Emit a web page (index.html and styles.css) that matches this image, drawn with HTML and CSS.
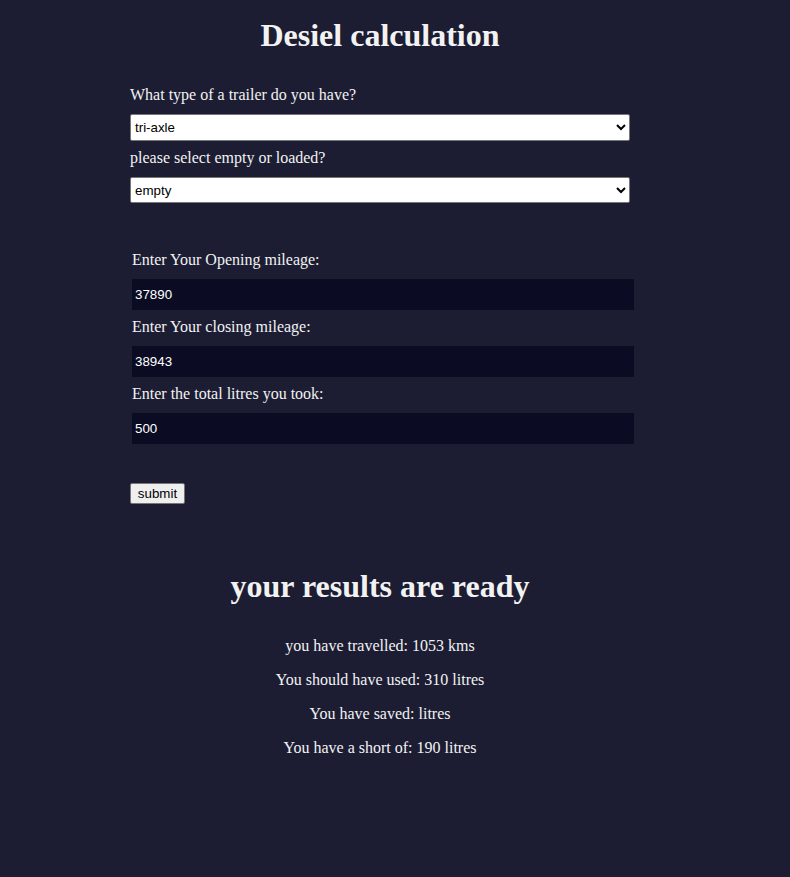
FILE: index.html
```html
<!DOCTYPE html>
<html lang="en">
<head>
<meta charset="utf-8">
<title>Desiel calculation</title>
<link rel="stylesheet" href="styles.css">
</head>
<body>
<main class="wrap">
  <h1 class="title">Desiel calculation</h1>
  <form class="form">
    <label class="label" for="trailer">What type of a trailer do you have?</label>
    <select class="select" id="trailer">
      <option>tri-axle</option>
      <option>interlink</option>
    </select>
    <label class="label label-second" for="load">please select empty or loaded?</label>
    <select class="select select-second" id="load">
      <option>empty</option>
      <option>loaded</option>
    </select>
    <div class="fields">
      <label class="label field-label" for="open">Enter Your Opening mileage:</label>
      <input class="input" id="open" type="text" value="37890">
      <label class="label field-label" for="close">Enter Your closing mileage:</label>
      <input class="input" id="close" type="text" value="38943">
      <label class="label field-label" for="litres">Enter the total litres you took:</label>
      <input class="input" id="litres" type="text" value="500">
    </div>
    <button class="btn" type="button">submit</button>
  </form>
  <section class="results">
    <h2 class="results-title">your results are ready</h2>
    <p class="line">you have travelled: 1053 kms</p>
    <p class="line">You should have used: 310 litres</p>
    <p class="line">You have saved: litres</p>
    <p class="line">You have a short of: 190 litres</p>
  </section>
</main>
</body>
</html>
```
FILE: styles.css
```css
html, body {
  margin: 0;
  padding: 0;
  background: #1c1d33;
}
body {
  color: #f2f2f2;
  font-family: "Liberation Serif", "Times New Roman", serif;
  font-size: 16px;
  min-height: 877px;
}
.wrap {
  width: 500px;
  margin-left: 130px;
  padding-top: 17px;
}
.title {
  font-size: 32px;
  font-weight: bold;
  text-align: center;
  margin: 0;
  line-height: 37px;
}
.form {
  display: flex;
  flex-direction: column;
  align-items: flex-start;
  margin-top: 32px;
}
.label {
  display: block;
  line-height: 18px;
  margin-bottom: 10px;
}
.label-second {
  margin-top: 8px;
}
.select {
  box-sizing: border-box;
  width: 500px;
  height: 27px;
  margin: 0;
  font-family: "Liberation Sans", Arial, sans-serif;
  font-size: 13.33px;
  background: #fff;
  color: #000;
  border: 1px solid #767676;
  border-radius: 2px;
  padding: 0;
}
.select-second {
  height: 26px;
}
.fields {
  display: flex;
  flex-direction: column;
  margin-top: 48px;
  margin-left: 2px;
  width: 502px;
}
.field-label {
  margin-bottom: 10px;
}
.field-label + .input {
  margin-bottom: 8px;
}
.input {
  box-sizing: border-box;
  width: 502px;
  height: 31px;
  margin: 0;
  border: none;
  outline: none;
  background: #0b0c23;
  color: #fff;
  font-family: "Liberation Sans", Arial, sans-serif;
  font-size: 13.33px;
  padding: 0 3px;
}
.btn {
  margin-top: 31px;
  box-sizing: border-box;
  height: 21px;
  width: 55px;
  padding: 0;
  font-family: "Liberation Sans", Arial, sans-serif;
  font-size: 13.33px;
  color: #000;
  background: #efefef;
  border: 1px solid #767676;
  border-radius: 2px;
}
.results {
  margin-top: 64px;
  text-align: center;
}
.results-title {
  font-size: 32px;
  font-weight: bold;
  line-height: 37px;
  margin: 0 0 32px;
}
.line {
  margin: 0 0 16px;
  line-height: 18px;
}
```
